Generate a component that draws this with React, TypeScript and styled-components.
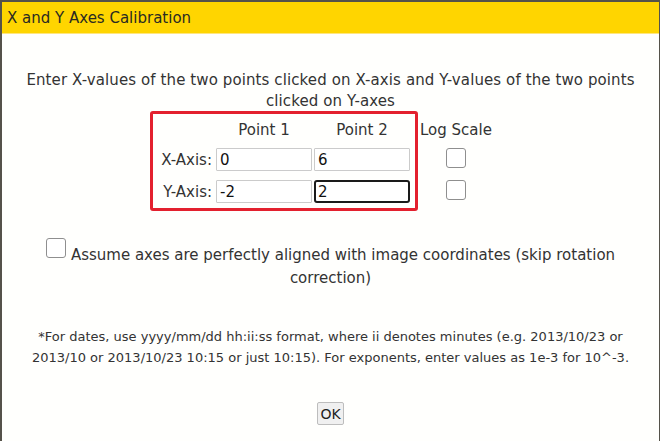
import styled, { createGlobalStyle } from "styled-components";

const Global = createGlobalStyle`
  html, body {
    margin: 0;
    padding: 0;
    background: #ffffff;
  }
  body {
    font-family: "DejaVu Sans", "Liberation Sans", sans-serif;
    color: #333;
  }
`;

const Dialog = styled.div`
  width: 660px;
  height: 441px;
  box-sizing: border-box;
  border: 1px solid #55524a;
  border-top-width: 2px;
  border-bottom: none;
  border-left-width: 2px;
  background: #fffffd;
  display: flex;
  flex-direction: column;
  overflow: hidden;
`;

const TitleBar = styled.div`
  height: 32px;
  flex: none;
  background: #ffd500;
  display: flex;
  align-items: center;
  padding-left: 5px;
  font-size: 15px;
  color: #2a2a22;
  border-bottom: 1px solid #ffe680;
  box-sizing: border-box;
`;

const Body = styled.div`
  display: flex;
  flex-direction: column;
  align-items: center;
  padding: 36px 0 0;
  text-align: center;
`;

const Intro = styled.p`
  margin: 0;
  font-size: 15px;
  line-height: 21px;
  letter-spacing: 0.1px;
  white-space: nowrap;
`;

const GridWrap = styled.div`
  position: relative;
  align-self: flex-start;
  margin: 5px 0 0 156px;
`;

const Grid = styled.div`
  display: grid;
  grid-template-columns: 56px 96px 96px 88px;
  grid-template-rows: 22px 23px 23px;
  column-gap: 2px;
  row-gap: 9px;
  align-items: center;
  font-size: 15px;
`;

const Head = styled.div`
  text-align: center;
  line-height: 22px;
  margin-top: 3px;
`;

const RowLabel = styled.div`
  text-align: right;
  padding-right: 2px;
  white-space: nowrap;
`;

const Field = styled.input<{ $focused?: boolean }>`
  box-sizing: border-box;
  width: 96px;
  height: 23px;
  font: inherit;
  font-size: 15px;
  color: #111;
  padding: 0 ${(p) => (p.$focused ? 2 : 3)}px;
  margin: 0;
  background: #fff;
  border: ${(p) => (p.$focused ? "2px solid #1a1a1a" : "1px solid #cbcbcb")};
  border-radius: ${(p) => (p.$focused ? "3px" : "1px")};
  outline: none;
`;

const Box = styled.span`
  display: inline-block;
  box-sizing: border-box;
  width: 20px;
  height: 20px;
  border: 1.5px solid #8f8f8f;
  border-radius: 3px;
  background: #fff;
`;

const BoxCell = styled.div`
  display: flex;
  justify-content: center;
  margin-top: -3px;
`;

const Highlight = styled.div`
  position: absolute;
  left: -8px;
  top: -6px;
  width: 268px;
  height: 100px;
  box-sizing: border-box;
  border: 3px solid #e3202e;
  border-radius: 3px;
  pointer-events: none;
`;

const AssumeRow = styled.div`
  margin-top: 35px;
  font-size: 15px;
  line-height: 23px;
  white-space: nowrap;
`;

const AssumeBox = styled(Box)`
  vertical-align: baseline;
  margin: 0 5px 2px 0;
`;

const Note = styled.p`
  margin: 36px 0 0;
  font-size: 13px;
  line-height: 21px;
  white-space: nowrap;
`;

const OkButton = styled.button`
  margin-top: 34px;
  height: 23px;
  padding: 0 2px;
  font-family: inherit;
  font-size: 14px;
  color: #222;
  background: #f0f0f0;
  border: 1px solid #bdbdbd;
  border-radius: 2px;
`;

export default function App() {
  return (
    <>
      <Global />
      <Dialog>
        <TitleBar>X and Y Axes Calibration</TitleBar>
        <Body>
          <Intro>
            Enter X-values of the two points clicked on X-axis and Y-values of the two points
            <br />
            clicked on Y-axes
          </Intro>
          <GridWrap>
            <Highlight />
            <Grid>
              <Head />
              <Head>Point 1</Head>
              <Head>Point 2</Head>
              <Head>Log Scale</Head>
              <RowLabel>X-Axis:</RowLabel>
              <Field defaultValue="0" />
              <Field defaultValue="6" />
              <BoxCell>
                <Box />
              </BoxCell>
              <RowLabel>Y-Axis:</RowLabel>
              <Field defaultValue="-2" />
              <Field defaultValue="2" $focused />
              <BoxCell>
                <Box />
              </BoxCell>
            </Grid>
          </GridWrap>
          <AssumeRow>
            <AssumeBox />
            Assume axes are perfectly aligned with image coordinates (skip rotation
            <br />
            correction)
          </AssumeRow>
          <Note>
            *For dates, use yyyy/mm/dd hh:ii:ss format, where ii denotes minutes (e.g. 2013/10/23 or
            <br />
            2013/10 or 2013/10/23 10:15 or just 10:15). For exponents, enter values as 1e-3 for 10^-3.
          </Note>
          <OkButton>OK</OkButton>
        </Body>
      </Dialog>
    </>
  );
}
